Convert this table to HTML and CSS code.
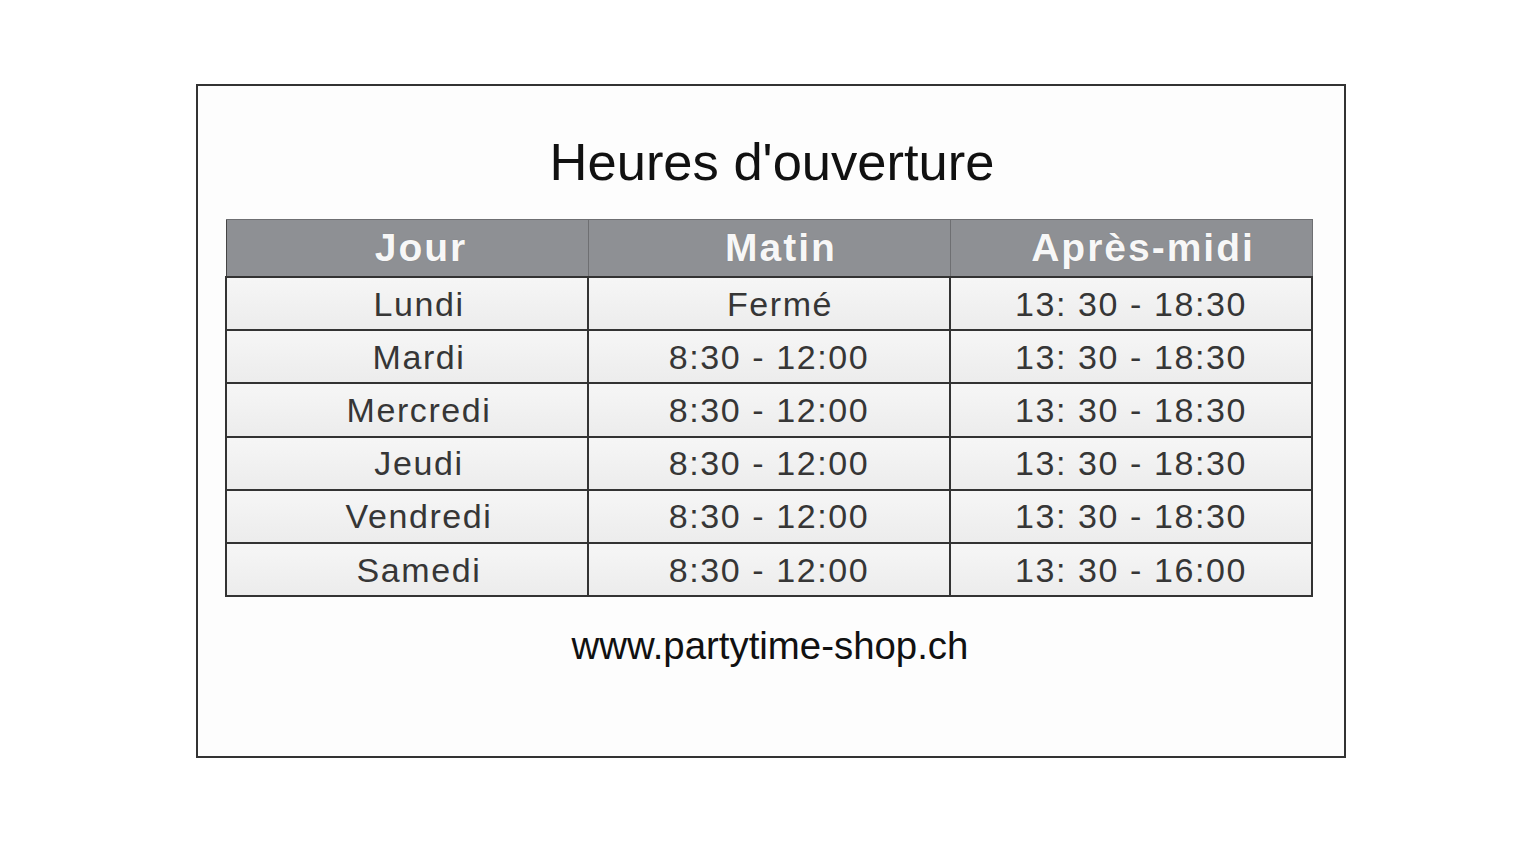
FILE: index.html
```html
<!DOCTYPE html>
<html lang="fr">
<head>
<meta charset="utf-8">
<title>Heures d'ouverture</title>
<link rel="stylesheet" href="styles.css">
</head>
<body>
<div class="card">
  <h1 class="title">Heures d'ouverture</h1>
  <table class="hours">
    <thead>
      <tr><th class="c1">Jour</th><th class="c2">Matin</th><th class="c3">Après-midi</th></tr>
    </thead>
    <tbody>
      <tr><td class="day">Lundi</td><td class="closed">Fermé</td><td>13: 30 - 18:30</td></tr>
      <tr><td class="day">Mardi</td><td>8:30 - 12:00</td><td>13: 30 - 18:30</td></tr>
      <tr><td class="day">Mercredi</td><td>8:30 - 12:00</td><td>13: 30 - 18:30</td></tr>
      <tr><td class="day">Jeudi</td><td>8:30 - 12:00</td><td>13: 30 - 18:30</td></tr>
      <tr><td class="day">Vendredi</td><td>8:30 - 12:00</td><td>13: 30 - 18:30</td></tr>
      <tr><td class="day">Samedi</td><td>8:30 - 12:00</td><td>13: 30 - 16:00</td></tr>
    </tbody>
  </table>
  <p class="url">www.partytime-shop.ch</p>
</div>
</body>
</html>
```
FILE: styles.css
```css
html, body {
  margin: 0;
  padding: 0;
  background: #ffffff;
}
body {
  font-family: "Liberation Sans", Arial, sans-serif;
  color: #222;
  padding-top: 84px;
  padding-left: 196px;
}
.card {
  box-sizing: border-box;
  width: 1150px;
  height: 674px;
  border: 2px solid #333;
  background: #fdfdfd;
  padding: 46px 0 0 27px;
}
.title {
  box-sizing: border-box;
  margin: 0 0 27px 0;
  width: 1088px;
  padding-left: 6px;
  text-align: center;
  font-size: 52.5px;
  font-weight: normal;
  line-height: 60px;
  color: #111;
}
.hours {
  width: 1088px;
  border-collapse: collapse;
  table-layout: fixed;
}
.hours th {
  background: #8e9094;
  color: #f7f7f7;
  font-size: 39px;
  font-weight: bold;
  letter-spacing: 2px;
  height: 56px;
  padding: 0 0 0 28px;
  border: 1px solid #6e6f72;
  border-left-color: #444;
  text-shadow: 0 0 1px #777;
  line-height: 54px;
}
.hours th.c2 { padding-left: 24px; }
.hours th.c3 { padding-left: 24px; }
.hours td {
  background: linear-gradient(#f6f6f6, #ececec);
  font-size: 34px;
  letter-spacing: 1.6px;
  color: #363636;
  text-align: center;
  height: 51.2px;
  padding: 0;
  border: 2px solid #333;
  line-height: 50px;
}
.hours td.day { padding-left: 24px; }
.hours td.closed { padding-left: 22px; }
.url {
  box-sizing: border-box;
  margin: 27px 0 0 0;
  width: 1088px;
  padding-left: 2px;
  text-align: center;
  font-size: 38.4px;
  line-height: 44px;
  color: #111;
}
```
